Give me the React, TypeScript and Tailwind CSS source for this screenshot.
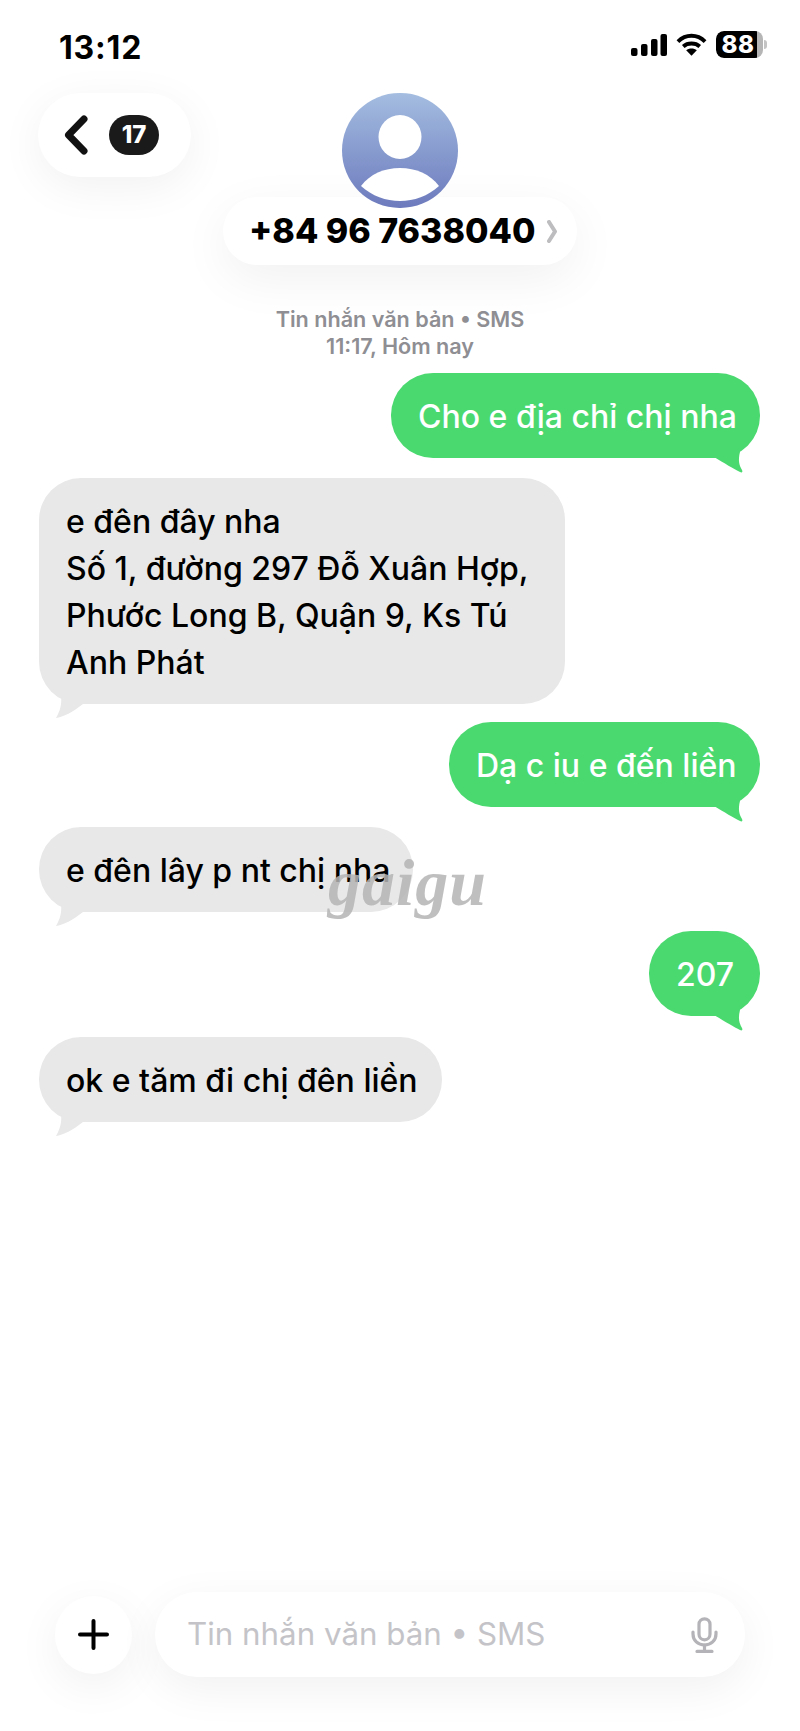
import React from "react";

const font = { fontFamily: '"Inter", "Noto Sans", sans-serif' };

function Tail({ side, color }: { side: "left" | "right"; color: string }) {
  if (side === "right") {
    return (
      <svg className="absolute right-[14px] bottom-[-16px]" width="32" height="28" viewBox="0 0 32 28">
        <path d="M0 11 C10 17 20 23 26 26 C28 27 29 26 28 24 C25 19 24 14 26 6 L26 0 L0 0 Z" fill={color} />
      </svg>
    );
  }
  return (
    <svg className="absolute left-[14px] bottom-[-15px]" width="32" height="26" viewBox="0 0 32 26">
      <path d="M8 4 C9 11 7 18 3 25 C10 24 20 19 30 11 L30 4 Z" fill={color} />
    </svg>
  );
}

function Bubble({
  side,
  children,
  className,
}: {
  side: "left" | "right";
  children: React.ReactNode;
  className?: string;
}) {
  const right = side === "right";
  const color = right ? "#4ad96f" : "#e8e8e9";
  return (
    <div
      className={`relative rounded-[42px] px-[27px] pt-[20px] pb-[18px] text-[32px] leading-[47px] font-medium ${
        right ? "self-end bg-[#4ad96f] text-white" : "self-start bg-[#e8e8e9] text-black"
      } ${className ?? ""}`}
    >
      <Tail side={side} color={color} />
      <div className="relative whitespace-nowrap">{children}</div>
    </div>
  );
}

export default function App() {
  return (
    <div className="relative flex h-[1731px] w-[800px] flex-col overflow-hidden bg-white" style={font}>
      {/* status bar */}
      <div className="flex h-[93px] items-start justify-between pl-[59px] pr-[33px] pt-[29px]">
        <span className="text-[32px] leading-[38px] font-bold text-black tracking-[0.8px]">13:12</span>
        <div className="flex items-center gap-[9px] pt-[2px]">
          <svg width="36" height="22" viewBox="0 0 36 22" fill="#000">
            <rect x="0" y="14" width="6.5" height="8" rx="2" />
            <rect x="10" y="10" width="6.5" height="12" rx="2" />
            <rect x="20" y="5" width="6.5" height="17" rx="2" />
            <rect x="29.5" y="0" width="6.5" height="22" rx="2" />
          </svg>
          <svg width="31" height="23" viewBox="0 0 32 23" fill="none" stroke="#000" strokeWidth="4">
            <path d="M2 8.5 C10 0.5 22 0.5 30 8.5" />
            <path d="M7.5 13.5 C12 9.5 20 9.5 24.5 13.5" />
            <path d="M16 23 L10.5 17.5 C13.5 15 18.5 15 21.5 17.5 Z" fill="#000" stroke="none" />
          </svg>
          <div className="flex items-center">
            <div className="flex h-[27px] w-[47px] items-center overflow-hidden rounded-[8px] bg-[#b5b5b5]">
              <div className="flex h-full w-[41px] items-center justify-center rounded-l-[8px] bg-black pl-[3px] text-[24px] leading-none font-extrabold text-white tracking-[0.5px]">
                88
              </div>
            </div>
            <div className="ml-[1px] h-[9px] w-[3px] rounded-r-full bg-[#c4c4c4]" />
          </div>
        </div>
      </div>

      {/* header */}
      <div className="grid h-[172px] grid-cols-[1fr_auto_1fr] items-start">
        <div className="pl-[38px]">
          <div className="flex h-[84px] w-[153px] items-center gap-[21px] rounded-[42px] bg-white pl-[26px] shadow-[0_10px_45px_rgba(0,0,0,0.06)]">
            <svg width="24" height="40" viewBox="0 0 24 40" fill="none" stroke="#111" strokeWidth="7" strokeLinecap="round" strokeLinejoin="round">
              <path d="M20 4 L4.5 20 L20 36" />
            </svg>
            <div className="flex h-[40px] w-[50px] items-center justify-center rounded-[20px] bg-[#1a1a1a] text-[24px] leading-none font-extrabold text-white">
              17
            </div>
          </div>
        </div>
        <div className="flex flex-col items-center">
          <div className="relative z-10 flex h-[115px] w-[116px] items-center justify-center rounded-full bg-gradient-to-b from-[#a4bde0] to-[#6d7abd]">
            <svg width="116" height="115" viewBox="0 0 116 115" fill="#fff">
              <ellipse cx="58" cy="44" rx="21.5" ry="22" />
              <path d="M19 93 C28 81 42 75 58 75 C74 75 88 81 97 93 C86 103 72 108 58 108 C44 108 30 103 19 93 Z" />
            </svg>
          </div>
          <div className="mt-[-11px] flex h-[68px] w-[354px] items-center rounded-[34px] bg-white pl-[26px] shadow-[0_14px_50px_rgba(0,0,0,0.06)]">
            <span className="text-[34px] leading-none font-extrabold text-black">+84 96 7638040</span>
            <svg className="ml-[12px]" width="10" height="23" viewBox="0 0 10 23" fill="none" stroke="#bdbdc0" strokeWidth="4" strokeLinecap="round" strokeLinejoin="round">
              <path d="M2 2 L8 11.5 L2 21" />
            </svg>
          </div>
        </div>
        <div />
      </div>

      {/* timestamp */}
      <div className="mt-[41px] flex flex-col items-center text-[21.6px] leading-[27px] font-semibold text-[#8e8e93]">
        <span>Tin nhắn văn bản • SMS</span>
        <span>11:17, Hôm nay</span>
      </div>

      {/* messages */}
      <div className="relative flex flex-col pl-[39px] pr-[40px] pt-[13px]">
        <Bubble side="right" className="w-[369px]">Cho e địa chỉ chị nha</Bubble>
        <Bubble side="left" className="mt-[20px] w-[526px]">
          e đên đây nha
          <br />
          Số 1, đường 297 Đỗ Xuân Hợp,
          <br />
          Phước Long B, Quận 9, Ks Tú
          <br />
          Anh Phát
        </Bubble>
        <Bubble side="right" className="mt-[18px] w-[311px]">Dạ c iu e đến liền</Bubble>
        <Bubble side="left" className="mt-[20px] w-[374px]">e đên lây p nt chị nha</Bubble>
        <Bubble side="right" className="mt-[19px] w-[111px]">207</Bubble>
        <Bubble side="left" className="mt-[21px] w-[403px]">ok e tăm đi chị đên liền</Bubble>
        {/* watermark */}
        <span
          className="absolute left-[328px] top-[490px] text-[66px] leading-none font-bold italic text-[#b4b4b4]/85 tracking-[1px]"
          style={{ fontFamily: '"Liberation Serif", serif' }}
        >
          gaigu
        </span>
      </div>

      {/* composer */}
      <div className="mt-auto flex items-center gap-[23px] pb-[54px] pl-[55px] pr-[55px]">
        <div className="flex h-[78px] w-[77px] items-center justify-center rounded-full bg-white shadow-[0_12px_45px_rgba(0,0,0,0.06)]">
          <svg width="31" height="31" viewBox="0 0 31 31" fill="none" stroke="#000" strokeWidth="4" strokeLinecap="round">
            <path d="M15.5 2 V29 M2 15.5 H29" />
          </svg>
        </div>
        <div className="flex h-[85px] flex-1 items-center justify-between rounded-[42px] bg-white pl-[32px] pr-[27px] shadow-[0_12px_45px_rgba(0,0,0,0.06)]">
          <span className="text-[31.3px] leading-none text-[#c4c4c8]">Tin nhắn văn bản • SMS</span>
          <svg width="27" height="36" viewBox="0 0 27 36" fill="none" stroke="#b4b4b8" strokeWidth="3.2" strokeLinecap="round">
            <rect x="8" y="1.8" width="11" height="21" rx="5.5" />
            <path d="M2 15 V17 C2 23.5 7 28 13.5 28 C20 28 25 23.5 25 17 V15" />
            <path d="M13.5 28 V34 M6 34.4 H21" />
          </svg>
        </div>
      </div>
    </div>
  );
}
